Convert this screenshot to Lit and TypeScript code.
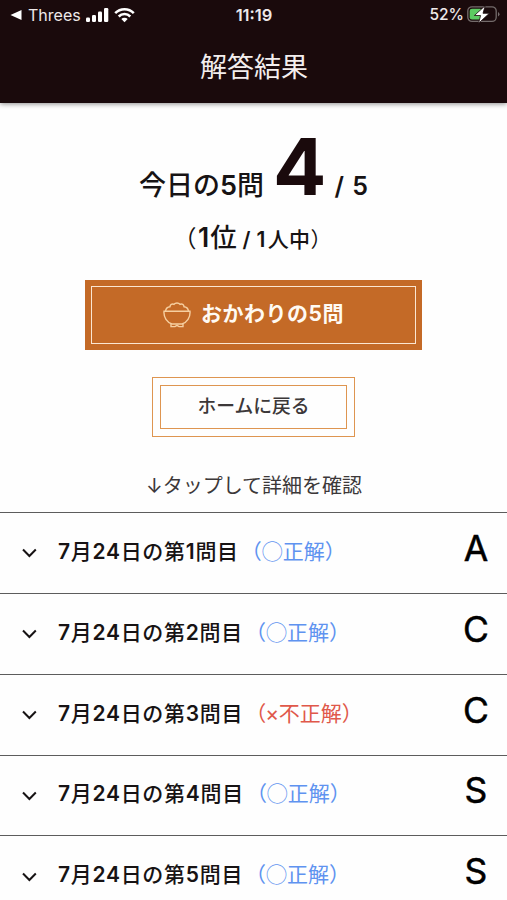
import { LitElement, html, css } from "lit";
import { customElement, property } from "lit/decorators.js";

interface Result {
  no: number;
  correct: boolean;
  grade: string;
}

const RESULTS: Result[] = [
  { no: 1, correct: true, grade: "A" },
  { no: 2, correct: true, grade: "C" },
  { no: 3, correct: false, grade: "C" },
  { no: 4, correct: true, grade: "S" },
  { no: 5, correct: true, grade: "S" },
];

@customElement("status-bar")
export class StatusBar extends LitElement {
  static styles = css`
    :host {
      display: grid;
      grid-template-columns: 1fr auto 1fr;
      align-items: center;
      height: 30px;
      padding: 0 7px 0 10px;
      color: #eee9e9;
      font: 500 16px/30px Inter, sans-serif;
    }
    .side {
      display: flex;
      align-items: center;
    }
    .right {
      justify-content: flex-end;
    }
    .app {
      margin: 0 5px 0 6px;
      font-size: 16px;
      font-weight: 400;
    }
    .time {
      font-weight: 600;
      font-size: 16.5px;
      margin-right: 2px;
    }
    .signal {
      margin-right: 5px;
    }
    .pct {
      margin-right: 3px;
      font-size: 15.5px;
      font-weight: 500;
    }
    svg {
      display: block;
    }
  `;

  render() {
    return html`
      <div class="side">
        <svg width="12" height="12" viewBox="0 0 12 12"><path d="M0.5 6 11.5 1v10z" fill="#fff" /></svg>
        <span class="app">Threes</span>
        <svg class="signal" width="23" height="16" viewBox="0 0 23 16" fill="#fff">
          <rect x="0" y="10.5" width="4" height="4.5" rx="1.2" />
          <rect x="6" y="8" width="4" height="7" rx="1.2" />
          <rect x="12" y="4.5" width="4" height="10.5" rx="1.2" />
          <rect x="18" y="1" width="4.3" height="14" rx="1.2" />
        </svg>
        <svg width="21" height="16" viewBox="0 0 21 16" fill="none" stroke="#fff" stroke-width="2.5">
          <path d="M1.2 6.1a13 13 0 0 1 18.6 0" />
          <path d="M4.7 9.5a8.2 8.2 0 0 1 11.6 0" />
          <path d="M7.3 12a4.5 4.5 0 0 1 6.4 0L10.5 15.2z" fill="#fff" stroke="none" />
        </svg>
      </div>
      <span class="time">11:19</span>
      <div class="side right">
        <span class="pct">52%</span>
        <svg width="33" height="20" viewBox="0 0 33 20">
          <rect x="0.8" y="1.8" width="28.4" height="14.6" rx="4.2" fill="none" stroke="#746b6b" stroke-width="1.3" />
          <path d="M31 7v4.4q1.5-.7 1.5-2.2T31 7z" fill="#746b6b" />
          <rect x="2.7" y="3.7" width="12.6" height="10.8" rx="2.3" fill="#5ccb62" />
          <path d="M18.2.7 7.4 10.5h6.2L11.6 18.2 22.4 8.3h-6.4z" fill="#fff" stroke="#1a0a0c" stroke-width="0.8" />
        </svg>
      </div>
    `;
  }
}

@customElement("result-row")
export class ResultRow extends LitElement {
  @property({ attribute: false }) result!: Result;

  static styles = css`
    :host {
      display: flex;
      align-items: center;
      box-sizing: border-box;
      height: 80.85px;
      padding: 0 17px 0 22px;
      border-top: 1.5px solid #5c5c5c;
      color: #171314;
      font: 500 21px/30px Inter, "Noto Sans CJK JP", sans-serif;
    }
    .chevron {
      display: block;
      margin: 1px 21px 0 0;
    }
    .label {
      white-space: nowrap;
      margin-top: -4px;
      letter-spacing: 0.7px;
    }
    .num {
      font-weight: 600;
    }
    .verdict {
      font-family: "Noto Sans CJK JP", sans-serif;
      font-weight: 400;
      letter-spacing: 0;
      color: #5f93f0;
      margin-left: 2px;
    }
    .wrong {
      color: #e0584a;
    }
    .times {
      font-family: Inter, sans-serif;
      margin: 0 -0.5px 0 -1px;
    }
    .grade {
      width: 28px;
      margin: -8px 0 0 auto;
      text-align: center;
      color: #000;
      font: 400 35.5px/44px Inter, sans-serif;
      -webkit-text-stroke: 0.5px #000;
    }
  `;

  render() {
    const { no, correct, grade } = this.result;
    return html`
      <svg class="chevron" width="15" height="10" viewBox="0 0 15 10" fill="none" stroke="#171314" stroke-width="2">
        <path d="M1 1.5 7.4 8 13.8 1.5" />
      </svg>
      <div class="label"><span class="num">7</span>月<span class="num">24</span>日の第<span class="num">${no}</span>問目<span class="verdict ${correct ? "" : "wrong"}">${correct ? "（◯正解）" : html`（<span class="times">×</span>不正解）`}</span></div>
      <div class="grade">${grade}</div>
    `;
  }
}

@customElement("app-root")
export class AppRoot extends LitElement {
  static styles = css`
    :host {
      display: flex;
      flex-direction: column;
      height: 900px;
      overflow: hidden;
      background: #fefefe;
      color: #171314;
      font-family: Inter, "Noto Sans CJK JP", sans-serif;
    }
    header {
      flex: none;
      height: 103px;
      background: #1a0a0c;
      box-shadow: 0 1px 5px rgba(0, 0, 0, 0.45);
    }
    h1 {
      margin: 16px 0 0 1px;
      text-align: center;
      color: #f3eeee;
      font: 400 27px/40px "Noto Sans CJK JP", sans-serif;
    }
    main {
      flex: none;
      display: flex;
      flex-direction: column;
      align-items: center;
    }
    .score {
      height: 100px;
      margin-top: 13px;
      white-space: pre;
      font-weight: 500;
      font-size: 27px;
      line-height: 100px;
    }
    .num {
      font-weight: 600;
    }
    .big {
      font-size: 79px;
      font-weight: 700;
      color: #1a0a0c;
      margin: 0 8px 0 9px;
    }
    .total {
      font-size: 25px;
      font-weight: 600;
      word-spacing: 2px;
    }
    .rank {
      margin: 1px 2px 0 0;
      height: 40px;
      line-height: 40px;
      font-size: 26.5px;
      font-weight: 500;
      white-space: pre;
    }
    .open {
      font-size: 23.5px;
      font-weight: 400;
      letter-spacing: 1.4px;
    }
    .place {
      letter-spacing: 1px;
    }
    .small {
      font-size: 21px;
      letter-spacing: 0.4px;
    }
    .count {
      margin-right: 2px;
    }
    .close {
      font-weight: 400;
    }
    .again {
      display: flex;
      box-sizing: border-box;
      width: 337px;
      height: 70px;
      margin-top: 23px;
      padding: 6px;
      background: #c46a27;
    }
    .again-inner {
      flex: 1;
      display: flex;
      align-items: center;
      justify-content: center;
      border: 1.5px solid #fbe6d2;
      color: #fffaf3;
      font: 700 21px/30px Inter, "Noto Sans CJK JP", sans-serif;
    }
    .again-text {
      margin-top: -2px;
      letter-spacing: 0.5px;
    }
    .bowl {
      margin: 0 10px 0 0;
    }
    .home {
      display: flex;
      box-sizing: border-box;
      width: 203px;
      height: 60px;
      margin-top: 27px;
      padding: 7px;
      border: 1px solid #de9550;
    }
    .home-inner {
      flex: 1;
      border: 1px solid #de9550;
      text-align: center;
      color: #3c3839;
      font: 500 18.8px/37px "Noto Sans CJK JP", sans-serif;
    }
    .hint {
      margin: 32px 0 0 1px;
      height: 34px;
      color: #3c3839;
      font-size: 20px;
      line-height: 34px;
    }
    .list {
      flex: none;
      margin-top: 9px;
    }
  `;

  render() {
    return html`
      <header>
        <status-bar></status-bar>
        <h1>解答結果</h1>
      </header>
      <main>
        <div class="score">今日の<span class="num">5</span>問<span class="big">4</span><span class="total">/ 5</span></div>
        <div class="rank"><span class="open">（</span><span class="num place">1</span>位<span class="small"><span class="num count"> / 1</span>人中<span class="close">）</span></span></div>
        <div class="again">
          <div class="again-inner">
            <svg class="bowl" width="28" height="26" viewBox="0 0 28 26" fill="none" stroke="#f6cfa0" stroke-width="1.4">
              <path d="M1 9.3H27C27.5 15.5 24 20.5 19 22H9C4 20.5.5 15.5 1 9.3z" />
              <path d="M2.5 9C3 6.4 4.8 4.8 7 4.7C7 2.5 9 1.3 11 2.3C12.5.5 15.5.5 17 2.3C19 1.3 21 2.5 21 4.7C23.2 4.8 25 6.4 25.500 9" />
              <path d="M8 22v2.6h4l2-1.2 2 1.2h4V22" />
            </svg>
            <span class="again-text">おかわりの5問</span>
          </div>
        </div>
        <div class="home"><div class="home-inner">ホームに戻る</div></div>
        <div class="hint">↓タップして詳細を確認</div>
      </main>
      <div class="list">
        ${RESULTS.map((r) => html`<result-row .result=${r}></result-row>`)}
      </div>
    `;
  }
}
